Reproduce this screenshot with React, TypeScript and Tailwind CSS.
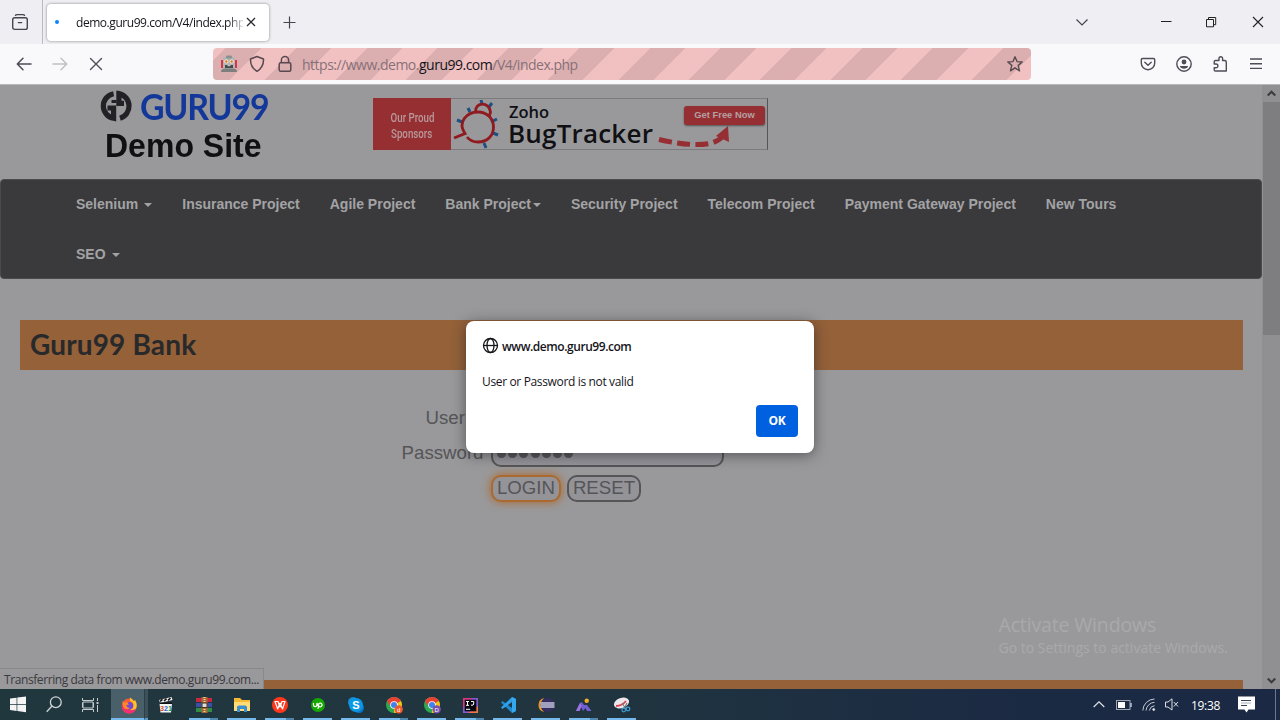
import React from 'react';

const ui = "font-['Open_Sans','Noto_Sans',sans-serif]";

function Caret() {
  return <span className="inline-block border-x-4 border-t-4 border-x-transparent border-t-[#a3a3a5] align-middle" />;
}

function TitleBar() {
  return (
    <div className="flex h-11 items-center bg-[#efeef3] text-[#45444f]">
      <div className="flex h-full w-[43px] shrink-0 items-center border-r border-[#bcbbc3] pl-[11px]">
        <svg width="18" height="18" viewBox="0 0 18 18" fill="none" stroke="currentColor" strokeWidth="1.4" strokeLinecap="round">
          <path d="M4.5 2.2 C5 1.6 5.3 1.6 6 1.6 H12 C12.7 1.6 13 1.6 13.5 2.2" />
          <rect x="1.7" y="4.8" width="14.6" height="11.6" rx="2" />
          <path d="M7.3 9.6 H10.7" />
        </svg>
      </div>
      <div className="ml-[3.5px] flex h-[37px] w-[222px] items-center rounded-[4px] bg-white pl-[8px] shadow-[0_0_3px_rgba(0,0,0,0.45)]">
        <span className="h-1 w-1 shrink-0 rounded-full bg-[#0a84ff]" />
        <div className={`ml-[17.5px] w-[167px] overflow-hidden whitespace-nowrap pt-0.5 text-[12px] leading-5 tracking-[-0.45px] text-[#15141a] [mask-image:linear-gradient(to_right,black_152px,transparent_170px)] ${ui}`}>demo.guru99.com/V4/index.php</div>
        <svg className="ml-[3px]" width="10" height="10" viewBox="0 0 10 10" stroke="#2b2a33" strokeWidth="1.3"><path d="M1 1 L9 9 M9 1 L1 9" /></svg>
      </div>
      <svg className="ml-[14.5px]" width="13" height="13" viewBox="0 0 13 13" stroke="currentColor" strokeWidth="1.2"><path d="M6.5 .5 V12.5 M.5 6.5 H12.5" /></svg>
      <svg className="ml-[779px]" width="14" height="9" viewBox="0 0 14 9" fill="none" stroke="currentColor" strokeWidth="1.2"><path d="M1.5 1.5 L7 7 L12.5 1.5" /></svg>
      <svg className="ml-[72px]" width="11" height="11" viewBox="0 0 11 11" stroke="#222" strokeWidth="1"><path d="M0 4.5 H10.5" /></svg>
      <svg className="ml-[34px]" width="11" height="11" viewBox="0 0 11 11" fill="none" stroke="#222" strokeWidth="1"><path d="M.5 2.5 H7.5 V9.8 H.5 Z M2.5 2.5 V.5 H9.7 V7.7 H7.5" /></svg>
      <svg className="ml-[35px]" width="12" height="12" viewBox="0 0 12 12" stroke="#222" strokeWidth="1.1"><path d="M1 1 L11 11 M11 1 L1 11" /></svg>
    </div>
  );
}

function Robot() {
  return (
    <svg width="18" height="18" viewBox="0 0 18 18">
      <path d="M1 5 H3 V13 H1 Z M15 5 H17 V13 H15 Z" fill="#d93548" />
      <rect x="3" y="2" width="12" height="12" rx="1.5" fill="#b3b4b5" />
      <rect x="6" y="0.5" width="6" height="3" rx="1" fill="#8b9090" />
      <path d="M1 17 Q1 13.5 5 13.5 H13 Q17 13.5 17 17 Z" fill="#7d7f7f" />
      <circle cx="6.3" cy="6.5" r="2" fill="#fff2e4" /><circle cx="11.7" cy="6.5" r="2" fill="#fff2e4" />
      <circle cx="6.3" cy="6.5" r="1.2" fill="#d97818" /><circle cx="11.7" cy="6.5" r="1.2" fill="#d97818" />
      <rect x="5" y="10" width="8" height="3" fill="#44494c" /><path d="M7.5 10.7 H10.5" stroke="#ddd" strokeWidth="1" />
    </svg>
  );
}

function Toolbar() {
  return (
    <div className="flex h-10 items-center bg-[#f9f9fb] text-[#4d4c57]">
      <svg className="ml-4" width="16" height="14" viewBox="0 0 16 14" fill="none" stroke="currentColor" strokeWidth="1.5" strokeLinecap="round" strokeLinejoin="round"><path d="M15 7 H1.5 M7 1.3 L1.3 7 L7 12.7" /></svg>
      <svg className="ml-5" width="16" height="14" viewBox="0 0 16 14" fill="none" stroke="#bfbfc5" strokeWidth="1.5" strokeLinecap="round" strokeLinejoin="round"><path d="M1 7 H14.5 M9 1.3 L14.7 7 L9 12.7" /></svg>
      <svg className="ml-[21px]" width="14" height="14" viewBox="0 0 14 14" stroke="currentColor" strokeWidth="1.4" strokeLinecap="round"><path d="M1.5 1.5 L12.5 12.5 M12.5 1.5 L1.5 12.5" /></svg>
      <div className="ml-[110px] flex h-8 w-[818px] items-center rounded-[4px] bg-[repeating-linear-gradient(-45deg,#f1c1c1_0_17px,#dbafb0_17px_42px,#f1c1c1_42px_50px)] pl-[7px]">
        <Robot />
        <svg className="ml-[11px]" width="16" height="18" viewBox="0 0 16 18" fill="none" stroke="#584850" strokeWidth="1.5" strokeLinejoin="round"><path d="M8 1.5 L14.5 4 C14.7 9.5 12.5 13.5 8 16.3 C3.5 13.5 1.3 9.5 1.5 4 Z" /></svg>
        <svg className="ml-[13px]" width="14" height="18" viewBox="0 0 14 18" fill="none" stroke="#584850" strokeWidth="1.5"><rect x="1.2" y="7.7" width="11.6" height="8.5" rx="1.5" /><path d="M3.4 7.7 V5 A3.6 3.6 0 0 1 10.6 5 V7.7" /></svg>
        <div className={`ml-[10px] w-[704px] whitespace-nowrap pt-0.5 text-[14px] leading-5 tracking-[-0.5px] text-[#877078] ${ui}`}>https://www.demo.<span className="text-[#15141a]">guru99.com</span>/V4/index.php</div>
        <svg width="18" height="18" viewBox="0 0 18 18" fill="none" stroke="#584850" strokeWidth="1.4" strokeLinejoin="round"><path d="M9 1.8 L11 6.6 L16.2 7 L12.2 10.4 L13.5 15.8 L9 12.8 L4.5 15.8 L5.8 10.4 L1.8 7 L7 6.6 Z" /></svg>
      </div>
      <svg className="ml-[109px]" width="16" height="16" viewBox="0 0 16 16" fill="none" stroke="currentColor" strokeWidth="1.4" strokeLinecap="round" strokeLinejoin="round"><path d="M2.5 2.5 H13.5 Q14.7 2.5 14.7 3.7 V7.2 A6.7 6.5 0 0 1 1.3 7.2 V3.7 Q1.3 2.5 2.5 2.5 Z M4.8 6.3 L8 9.2 L11.2 6.3" /></svg>
      <svg className="ml-5" width="16" height="16" viewBox="0 0 16 16"><circle cx="8" cy="8" r="7.2" fill="none" stroke="currentColor" strokeWidth="1.4" /><circle cx="8" cy="6" r="2.4" fill="currentColor" /><path d="M3.8 10 H12.2 Q11.3 12.8 8 12.8 Q4.7 12.8 3.8 10 Z" fill="currentColor" /></svg>
      <svg className="ml-5" width="17" height="16" viewBox="0 0 17 16" fill="none" stroke="currentColor" strokeWidth="1.4" strokeLinejoin="round"><path d="M5.5 4.5 H7 V2.5 A1.8 1.8 0 0 1 10.6 2.5 V4.5 H12.5 Q14.3 4.5 14.3 6 V15 H3.5 Q2.2 15 2.2 13.7 V11.8 H4 A1.9 1.9 0 0 0 4 8 H2.2 V6 Q2.2 4.5 3.5 4.5 Z" /></svg>
      <svg className="ml-5" width="14" height="14" viewBox="0 0 14 14" stroke="currentColor" strokeWidth="1.4"><path d="M1 2 H13 M1 6.7 H13 M1 11.4 H13" /></svg>
    </div>
  );
}

function Banner() {
  return (
    <div className="mt-[13px] flex h-[52px] w-[395px] border border-[#7c7c7f] border-r-[#555]">
      <div className="-my-px -ml-px flex w-[78px] shrink-0 flex-col items-center justify-center bg-[#952f32] pt-[2px] font-['Roboto',sans-serif] text-[13.5px] font-medium leading-[16px] text-[#b9999b]">
        <span className="scale-x-[0.72] whitespace-nowrap">Our Proud</span>
        <span className="scale-x-[0.72] whitespace-nowrap">Sponsors</span>
      </div>
      <svg className="ml-0.5 shrink-0" width="48" height="50" viewBox="0 0 48 50" fill="none">
        <path d="M28 1 L29 5 M39 4 L36 8 M15 9 L17 13 M4 21 L9 23 M38 23 L44 20 M40 34 L45 36 M31 44 L33 49" stroke="#1c4f84" strokeWidth="3" />
        <path d="M22.5 13 C22 2.5 36.5 2.5 37.5 13 L36 18" stroke="#8f1b20" strokeWidth="2.8" />
        <path d="M1 39 L12 34.5 C4 23 14 13 25 13 C34 13 40.5 19.5 40.5 28 C40.5 37 34 43 25 43 Q18 43 14 38" stroke="#8f1b20" strokeWidth="2.8" />
      </svg>
      <div className={`ml-[6px] w-[149px] shrink-0 whitespace-nowrap font-semibold text-[#101014] ${ui}`}>
        <div className="ml-[2px] mt-[4px] text-[16.5px] leading-[18px]">Zoho</div>
        <div className="ml-px text-[26px] leading-[24px] tracking-[0.2px]">BugTracker</div>
      </div>
      <div className="flex flex-col">
        <div className="ml-[28px] mt-[7px] h-[19px] w-[81px] shrink-0 whitespace-nowrap rounded-[3px] bg-[#962f34] text-center font-['Liberation_Sans',sans-serif] text-[9.4px] font-bold leading-[17px] text-[#b5a0a2] shadow-[0_1px_2px_#555]">Get Free Now</div>
        <svg className="ml-[2px] shrink-0" width="76" height="23" viewBox="0 0 76 23">
          <path d="M1 14.5 Q34 22 52 18.5 Q61 16 65 11" fill="none" stroke="#952f34" strokeWidth="5" strokeDasharray="13 5.3" />
          <path d="M70 1 L58 11 L71 17 Z" fill="#952f34" />
        </svg>
      </div>
    </div>
  );
}

const navItems: [string, boolean, string][] = [
  ['Selenium', true, 'ml-[6px]'], ['Insurance Project', false, ''], ['Agile Project', false, ''], ['Bank Project', true, 'ml-[2px]'],
  ['Security Project', false, ''], ['Telecom Project', false, ''], ['Payment Gateway Project', false, ''], ['New Tours', false, ''], ['SEO', true, 'ml-[6px]'],
];

function Page() {
  return (
    <main className="h-full w-[1262px] shrink-0 overflow-hidden font-['Liberation_Sans',sans-serif]">
      <header className="flex h-[94px]">
        <div className="w-[373px] shrink-0 pl-[100px]">
          <div className="mt-[5px] flex h-[32px] items-center">
            <svg width="32" height="32" viewBox="0 0 32 32" fill="none" stroke="#222126" strokeWidth="5.2">
              <path d="M13.6 3.7 A12.5 12.5 0 0 0 13.6 28.3 V18 H7.5" />
              <path d="M20 28.2 A12.7 12.7 0 0 0 18.9 3.6 V13.4 H24" />
              <path d="M11.5 11.5 H16.5" strokeWidth="3" />
            </svg>
            <span className="ml-[8px] origin-left scale-x-[0.94] font-['Lato',sans-serif] text-[36px] font-bold leading-[32px] tracking-[-1.3px] text-[#14389a]">GURU99</span>
          </div>
          <div className="ml-[5px] mt-[5px] origin-left scale-x-[0.97] whitespace-nowrap text-[33px] font-bold leading-[38px] text-[#101012]">Demo Site</div>
        </div>
        <Banner />
      </header>
      <nav className="flex h-[100px] flex-wrap content-start rounded-[4px] border border-[#4b4b4d] bg-[#3a3a3c] pl-[60px] pr-[100px] text-[14px] font-bold leading-[48px] text-[#a3a3a5]">
        {navItems.map(([label, caret, gap]) => (
          <div key={label} className="flex h-[50px] items-start whitespace-nowrap px-[15px]">{label}{caret && <span className={`mt-[23px] flex ${gap}`}><Caret /></span>}</div>
        ))}
      </nav>
      <div className="ml-5 mt-[41px] h-[50px] w-[1223px] bg-[#946139] pl-[10px] font-['Lato',sans-serif] text-[28px] font-bold leading-[49px] tracking-[0.15px] text-[#28292b]">Guru99 Bank</div>
      <form className="mt-[35px] grid h-[97px] grid-cols-[483.5px_1fr] gap-x-[7.5px] gap-y-2 text-[18.67px] leading-[25px] text-[#555558]">
        <label className="text-right">UserID</label>
        <div className="h-[27px] w-[233px] rounded-[10px] border-2 border-[#555558]" />
        <label className="text-right">Password</label>
        <div className="flex h-[27px] w-[233px] items-center gap-[2.2px] rounded-[10px] border-2 border-[#555558] bg-[#949398] pl-1">
          {[0, 1, 2, 3, 4, 5, 6].map((n) => <span key={n} className="h-[9px] w-[9px] rounded-full bg-[#555558]" />)}
        </div>
        <span />
        <div className="flex gap-[6px] text-center leading-[22px]">
          <div className="h-[27px] w-[70px] rounded-[10px] border-2 border-[#aa6a2f] bg-[#949398] shadow-[0_0_9px_1px_#a9703f]">LOGIN</div>
          <div className="h-[27px] w-[74px] rounded-[10px] border-2 border-[#555558] bg-[#949398]">RESET</div>
        </div>
      </form>
      <div className="ml-5 mt-[178px] h-[9px] w-[1223px] bg-[#946139]" />
    </main>
  );
}

function Scrollbar() {
  return (
    <div className="flex w-[18px] flex-col items-center bg-[#909092] text-[#3c3c3e]">
      <div className="flex h-[17px] items-center"><svg width="9" height="7" viewBox="0 0 9 7" fill="none" stroke="currentColor" strokeWidth="2.2"><path d="M.7 5.5 L4.5 1.8 L8.3 5.5" /></svg></div>
      <div className="h-[233px] w-[17px] bg-[#7e7e80]" />
      <div className="mt-auto flex h-[17px] items-center"><svg width="9" height="7" viewBox="0 0 9 7" fill="none" stroke="currentColor" strokeWidth="2.2"><path d="M.7 1.5 L4.5 5.2 L8.3 1.5" /></svg></div>
    </div>
  );
}

function Dialog() {
  return (
    <div className={`absolute left-[466px] top-[321px] flex h-[132px] w-[348px] flex-col rounded-lg bg-white px-4 text-[#15141a] shadow-[0_2px_14px_rgba(30,30,35,0.55)] ${ui}`}>
      <div className="mt-4 flex h-[17px] items-center whitespace-nowrap text-[12px] font-semibold leading-[17px] tracking-[-0.45px]">
        <svg className="mr-[3px]" width="17" height="17" viewBox="0 0 17 17" fill="none" stroke="currentColor" strokeWidth="1.3"><circle cx="8.5" cy="8.5" r="7" /><ellipse cx="8.5" cy="8.5" rx="3.5" ry="7" /><path d="M1.5 8.5 H15.5" /></svg>
        <span className="pt-px">www.demo.guru99.com</span>
      </div>
      <div className="mb-[15px] mt-5 whitespace-nowrap text-[12px] leading-4 tracking-[-0.35px]">User or Password is not valid</div>
      <div className="flex h-8 w-[42px] items-center justify-center self-end rounded-[4px] bg-[#0061e0] text-[12px] font-bold tracking-[-0.3px] text-white">OK</div>
    </div>
  );
}

function Chrome({ badge, letter }: { badge: string; letter: string }) {
  return (
    <svg width="17" height="17" viewBox="0 0 17 17">
      <circle cx="8" cy="8" r="8" fill="#2fa84f" />
      <path d="M8 8 L1.1 4 A8 8 0 0 1 14.9 4 Z" fill="#e94235" />
      <path d="M8 8 L14.9 4 A8 8 0 0 1 8 16 Z" fill="#fbc116" />
      <path d="M1.1 4 H8 V8 H3.4 Z" fill="#e94235" />
      <circle cx="8" cy="8" r="3.8" fill="#fff" /><circle cx="8" cy="8" r="3" fill="#3e82ee" />
      <circle cx="12.7" cy="12.4" r="4.2" fill={badge} />
      <text x="12.7" y="14.5" fontSize="6" fill="white" textAnchor="middle" fontFamily="Liberation Sans">{letter}</text>
    </svg>
  );
}

const apps: { icon: React.ReactNode; bar: 'none' | 'single' | 'multi' }[] = [
  { bar: 'none', icon: <svg width="16" height="16" viewBox="0 0 16 16"><path d="M1.5 6.5 H14 L13 15.5 H2.5 Z M1 3 L13.5 0 L14.5 3 L2 6 Z" fill="#f5f5f5" /><path d="M2 4.5 L4.5 2.3 M6 4 L8.5 1.7 M10 3.3 L12.5 1 M1.5 6.2 H14" stroke="#111" strokeWidth="1.6" /><text x="2" y="14" fontSize="7.2" fontWeight="bold" fontFamily="Liberation Sans" fill="#d4531c">3<tspan fill="#2466c5">2</tspan><tspan fill="#25984b">1</tspan></text></svg> },
  { bar: 'multi', icon: <svg width="17" height="16" viewBox="0 0 17 16"><path d="M0 1 H16 V5 H0 Z" fill="#c72640" /><path d="M0 6 H16 V10 H0 Z" fill="#3752a5" /><path d="M0 11 H16 V15 H0 Z" fill="#2f8d46" /><path d="M5.5 0 H11.5 V16 H5.5 Z" fill="#a8683a" /><path d="M8.5 0 V6 M8.5 10 V16" stroke="#f3d68b" strokeWidth="2" strokeDasharray="1 1" /><rect x="6" y="6" width="5" height="4.5" fill="#ddd" stroke="#432" /></svg> },
  { bar: 'single', icon: <svg width="16" height="14" viewBox="0 0 16 14"><path d="M0 0 H6 L8 2 H16 V13 H0 Z" fill="#f5bb36" /><path d="M0 4 H16 V13 H0 Z" fill="#ffdc75" /><path d="M3 14 V9 Q3 7.5 5 7.5 H11 Q13 7.5 13 9 V14 H10 V11 H6 V14 Z" fill="#398fd0" /></svg> },
  { bar: 'multi', icon: <svg width="16" height="16" viewBox="0 0 16 16"><circle cx="8" cy="8" r="8" fill="#ff371c" /><path d="M3 4.5 H6 L8 10 L10 4.5 H13 L10.5 12 L8 6 L5.7 12 Z" fill="none" stroke="white" strokeWidth="1.2" strokeLinejoin="round" /></svg> },
  { bar: 'single', icon: <svg width="14" height="14" viewBox="0 0 14 14"><circle cx="7" cy="7" r="7" fill="#14a800" /><path d="M2.5 5 V7 A1.7 1.7 0 0 0 5.9 7 V5 Q7 8.8 9.3 8.8 A1.9 1.9 0 1 0 7.9 5.5 L7 11" fill="none" stroke="white" strokeWidth="1.2" /></svg> },
  { bar: 'single', icon: <svg width="16" height="16" viewBox="0 0 16 16"><circle cx="5.2" cy="5.2" r="5.2" fill="#168edb" /><circle cx="10.8" cy="10.8" r="5.2" fill="#0874c7" /><circle cx="8" cy="8" r="7" fill="#0998e5" /><text x="8" y="12" textAnchor="middle" fontFamily="Liberation Sans" fontSize="11" fontWeight="bold" fill="white">S</text></svg> },
  { bar: 'multi', icon: <Chrome badge="#ed5a2d" letter="d" /> },
  { bar: 'single', icon: <Chrome badge="#7651ad" letter="D" /> },
  { bar: 'multi', icon: <svg width="15" height="15" viewBox="0 0 15 15"><path d="M0 0 H15 V15 H0 Z" fill="#855acc" /><path d="M0 0 H9 L0 10 Z" fill="#dc3682" /><path d="M15 8 V15 H5 Z" fill="#ed7545" /><rect x="1.7" y="1.7" width="11.6" height="11.6" fill="#080810" /><path d="M3 3.5 H6 M4.5 3.5 V7.3 M3 7.3 H6 M8 3.5 H10.7 V6 Q10.7 7.6 8 7.2 M3 11.3 H7.2" fill="none" stroke="white" strokeWidth="1" /></svg> },
  { bar: 'single', icon: <svg width="17" height="16" viewBox="0 0 17 16"><path d="M12 0 L16 2 V14 L12 16 L1 5.5 L2.5 4 L12 11 Z" fill="#1f8ad2" /><path d="M12 0 L12 5 L2.5 12 L1 10.5 Z" fill="#2da0ea" /><path d="M12 0 L16 2 V14 L12 16 Z" fill="#35a9ee" /></svg> },
  { bar: 'single', icon: <svg width="17" height="16" viewBox="0 0 17 16"><path d="M6 1 A7.2 7.2 0 0 0 6 15 A10 10 0 0 1 6 1" fill="#e79624" /><circle cx="9.5" cy="8" r="7" fill="#352d60" /><path d="M2.5 6 H16.5 M2.5 8 H16.5 M2.5 10 H16.5" stroke="#c5c5dd" strokeWidth="1.3" /></svg> },
  { bar: 'multi', icon: <svg width="16" height="15" viewBox="0 0 16 15"><path d="M0 13 L4 5 Q5 3.5 6.5 5 L8 7 H11 L15.5 13 H11 L9.5 10 L7 13 L5 9 L3.5 13 Z" fill="#715fd2" /><path d="M0 13 L4 5 L5.5 8 L3.5 13 Z" fill="#9e73df" /><circle cx="10.7" cy="2.7" r="2.2" fill="#f3ad24" /></svg> },
  { bar: 'single', icon: <svg width="17" height="16" viewBox="0 0 17 16"><ellipse cx="7.5" cy="6" rx="7.8" ry="5" fill="#eee8ed" transform="rotate(-20 7.5 6)" /><path d="M2 9 Q8 9 12 4" fill="none" stroke="#d94650" strokeWidth="1.8" /><path d="M8 6 L12 12 M13 6 L10 12" stroke="#777" strokeWidth="1.1" /><circle cx="9.7" cy="13" r="1.8" fill="none" stroke="#3d9fd5" strokeWidth="1.2" /><circle cx="14" cy="12" r="1.8" fill="none" stroke="#3d9fd5" strokeWidth="1.2" /></svg> },
];

function Taskbar() {
  return (
    <footer className="flex h-[31px] bg-[linear-gradient(to_right,#21373e_0%,#20353f_45%,#1b2a43_80%,#1b2944_100%)] text-white">
      <div className="flex w-[111px] shrink-0 items-center">
        <svg className="ml-[10px]" width="16" height="17" viewBox="0 0 16 17" fill="#f4f4f4"><path d="M0 2.6 L6.6 1.7 V8 H0 Z M7.3 1.6 L16 .4 V8 H7.3 Z M0 8.7 H6.6 V15 L0 14.1 Z M7.3 8.7 H16 V16.3 L7.3 15.1 Z" /></svg>
        <svg className="ml-[20px]" width="16" height="17" viewBox="0 0 16 17" fill="none" stroke="#cfd4d6" strokeWidth="1.3"><circle cx="9.8" cy="6.2" r="5.4" /><path d="M6 10 L.7 15.8" /></svg>
        <svg className="ml-[20px]" width="17" height="16" viewBox="0 0 17 16" fill="none" stroke="#c7cdcf" strokeWidth="1"><path d="M.5 1 V3.5 H11.5 V1 M.5 15 V12.5 H11.5 V15 M.5 5.5 V10.5 M11.5 5.5 V10.5 M1 5 H11 V11 H1 Z M15.5 1 V4 M15.5 8 V15" /><path d="M14.5 6 H16.5" strokeWidth="2" /></svg>
      </div>
      <div className="flex w-[33px] shrink-0 items-center justify-center border-b-2 border-[#76b9ed] bg-[#49606a] pl-[3px] pt-[3px]">
        <svg width="17" height="17" viewBox="0 0 17 17"><circle cx="8.2" cy="9" r="7.5" fill="#ff5c36" /><path d="M9 .5 Q12 2 12 4 Q14 4 14 2.8 Q18 10 13 14 Q9 18 3 14 Q8 15 12 11 Q14 6 9 4 Z" fill="#ffc42a" /><path d="M1 7 Q0 14 6 16 Q12 18 15 12 Q8 15 4 10 Z" fill="#f32d72" /><circle cx="8.3" cy="8.8" r="3.8" fill="#7049d6" /><path d="M1.5 4 L3.4 5.7 L6 4.8 L8 7.5 L5 8.6 Q6 11 9 11 Q5 14 2 10 Z" fill="#ff8728" /></svg>
      </div>
      <div className="w-[4px] shrink-0 border-b-2 border-l border-b-[#5898c8] border-l-[#2a3f47] bg-[#3c515a]" />
      <div className="-ml-px flex shrink-0">
        {apps.map((app, i) => (
          <div key={i} className="flex w-[38px] shrink-0 flex-col items-center pr-px">
            <div className="flex h-[29px] items-center pl-px pt-[3px]">{app.icon}</div>
            {app.bar === 'single' && <div className="h-[2px] w-[29px] bg-[#76b9ed]" />}
            {app.bar === 'multi' && <div className="h-[2px] w-[29px] border-r-[8px] border-[#4f86ad] bg-[#76b9ed]" />}
          </div>
        ))}
      </div>
      <div className="ml-auto flex items-center pr-[4px]">
        <svg width="12" height="7" viewBox="0 0 12 7" fill="none" stroke="#dce0e6" strokeWidth="1.2"><path d="M.7 6 L6 .8 L11.3 6" /></svg>
        <svg className="ml-[11px]" width="16" height="10" viewBox="0 0 16 10"><rect x=".5" y=".5" width="13.5" height="9" fill="none" stroke="#a0a8b4" /><path d="M2 2 H9 V8 H2 Z" fill="#fff" /><path d="M15 3 V7" stroke="#ccd" strokeWidth="1.4" /></svg>
        <svg className="ml-[10px]" width="14" height="13" viewBox="0 0 14 13" fill="none" stroke="#c5cbd3" strokeWidth="1"><path d="M.8 12.5 A12 12 0 0 1 12.5 1 M4 12.5 A9 9 0 0 1 12.5 4.3 M7.3 12.5 A6 6 0 0 1 12.5 7.7" /><circle cx="11.7" cy="11.5" r="1" fill="#fff" /></svg>
        <svg className="ml-[9px]" width="14" height="13" viewBox="0 0 14 13" fill="none" stroke="#dce0e6" strokeWidth="1"><path d="M.5 4 H3 L7 .8 V12 L3 9 H.5 Z M8.8 4 L13 8.5 M13 4 L8.8 8.5" /></svg>
        <span className={`ml-[12px] w-[28px] whitespace-nowrap pt-0.5 text-[12px] leading-4 tracking-[-0.3px] ${ui}`}>19:38</span>
        <svg className="ml-[19px]" width="17" height="17" viewBox="0 0 17 17"><path d="M0 .5 H17 V13.5 H10.5 L8.5 16.5 L6.5 13.5 H0 Z" fill="#fff" /><path d="M3 4.5 H13 M3 9.5 H9" stroke="#34425a" /><path d="M3 7 H13" stroke="#aab" /></svg>
        <span className="ml-[20px] h-[31px] w-px bg-[#6c7789]" />
      </div>
    </footer>
  );
}

export default function App() {
  return (
    <div className="relative flex h-[720px] w-[1280px] flex-col overflow-hidden bg-[#99999b]">
      <TitleBar />
      <Toolbar />
      <div className="flex h-[605px] border-t border-[#b8b8ba]">
        <Page />
        <Scrollbar />
      </div>
      <Taskbar />
      <Dialog />
      <div className={`absolute left-[998.5px] top-[611px] whitespace-nowrap text-[#a9a9ab] ${ui}`}>
        <div className="text-[19.5px] leading-[27px] tracking-[-0.15px]">Activate Windows</div>
        <div className="text-[14px] leading-[20px]">Go to Settings to activate Windows.</div>
      </div>
      <div className={`absolute left-0 top-[668px] h-[21px] w-[264px] whitespace-nowrap border-r border-t border-[#888] bg-[#99989b] pl-1 text-[12px] leading-[22px] tracking-[-0.41px] text-[#3a393e] ${ui}`}>Transferring data from www.demo.guru99.com...</div>
    </div>
  );
}
